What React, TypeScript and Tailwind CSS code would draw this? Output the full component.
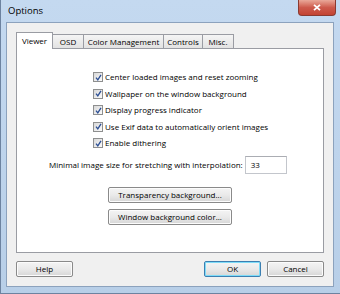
import React from "react";

const font = { fontFamily: '"Open Sans", "Noto Sans", sans-serif' };

function Check({ label }: { label: string }) {
  return (
    <div className="flex items-center h-[16.5px] whitespace-nowrap">
      <div className="w-[10px] h-[10px] border border-[#8e8f8f] bg-gradient-to-br from-[#d8d8d8] to-[#fbfbfb] flex items-center justify-center">
        <svg width="7" height="7" viewBox="0 0 7 7">
          <path d="M1 3.6 L2.8 5.8 L6 0.8" stroke="#2c4f94" strokeWidth="1.3" fill="none" />
        </svg>
      </div>
      <span className="ml-[2px] text-[8px] text-black leading-none">{label}</span>
    </div>
  );
}

function Btn({ label, w, def }: { label: string; w: string; def?: boolean }) {
  return (
    <div
      className={`${w} h-[16px] rounded-[2px] border ${def ? "border-[#3c7fb1] shadow-[inset_0_0_0_1px_#7fdcf8]" : "border-[#8a8a8a] shadow-[inset_0_0_0_1px_#fcfcfc]"} bg-gradient-to-b from-[#f4f4f4] via-[#eaeaea] to-[#d6d6d6] flex items-center justify-center text-[8px] text-black leading-none whitespace-nowrap`}
    >
      {label}
    </div>
  );
}

function Tab({ label, w }: { label: string; w: string }) {
  return (
    <div className={`${w} h-[14px] border border-b-0 border-l-0 border-[#9a9ca3] bg-gradient-to-b from-[#f5f5f5] to-[#e2e2e2] flex items-center justify-center`}>
      {label}
    </div>
  );
}

export default function App() {
  return (
    <div style={font} className="w-[340px] h-[294px] bg-gradient-to-b from-[#c4d9f0] to-[#b8cfe8] border-l border-b border-[#6d83a0] flex flex-col">
      <div className="h-[22px] flex items-start justify-between">
        <span className="ml-[7px] mt-[6px] text-[9.5px] text-black leading-none">Options</span>
        <div className="mr-[4px] w-[38px] h-[16px] rounded-b-[4px] border border-t-0 border-[#8a3a30] bg-gradient-to-b from-[#e9a899] via-[#cd5a4c] to-[#c34332] flex items-center justify-center">
          <svg width="8" height="7" viewBox="0 0 8 7">
            <path d="M1 0.8 L7 6.2 M7 0.8 L1 6.2" stroke="#fff" strokeWidth="1.8" />
          </svg>
        </div>
      </div>
      <div className="ml-[5px] w-[328px] h-[265px] bg-[#f0f0f0] border border-[#8ca2bd] flex flex-col pl-[9px] pt-[9px]">
        <div className="flex items-end h-[16px] text-[8px] text-black leading-none whitespace-nowrap">
          <div className="w-[37px] h-[17px] bg-white border border-b-0 border-[#9a9ca3] flex items-center justify-center relative z-10 mb-[-1px]">Viewer</div>
          <Tab label="OSD" w="w-[31px]" />
          <Tab label="Color Management" w="w-[80px]" />
          <Tab label="Controls" w="w-[39px]" />
          <Tab label="Misc." w="w-[31px]" />
        </div>
        <div className="w-[308px] h-[205px] bg-white border border-[#9a9ca3] flex flex-col">
          <div className="ml-[76px] mt-[20px] flex flex-col">
            <Check label="Center loaded images and reset zooming" />
            <Check label="Wallpaper on the window background" />
            <Check label="Display progress indicator" />
            <Check label="Use Exif data to automatically orient images" />
            <Check label="Enable dithering" />
          </div>
          <div className="flex items-center mt-[4px] ml-[32px] whitespace-nowrap">
            <span className="text-[8px] text-black leading-none">Minimal image size for stretching with interpolation:</span>
            <div className="ml-[2px] w-[42px] h-[18px] border border-[#c3c6cc] border-t-[#abadb3] bg-white flex items-center pl-[5px] text-[8px] text-black">33</div>
          </div>
          <div className="flex flex-col ml-[91px] mt-[13px] gap-[6px]">
            <Btn label="Transparency background..." w="w-[124px]" />
            <Btn label="Window background color..." w="w-[124px]" />
          </div>
        </div>
        <div className="flex items-center mt-[8px] w-[308px]">
          <Btn label="Help" w="w-[57px]" />
          <div className="flex-1" />
          <Btn label="OK" w="w-[57px]" def />
          <div className="w-[6px]" />
          <Btn label="Cancel" w="w-[57px]" />
        </div>
      </div>
    </div>
  );
}
